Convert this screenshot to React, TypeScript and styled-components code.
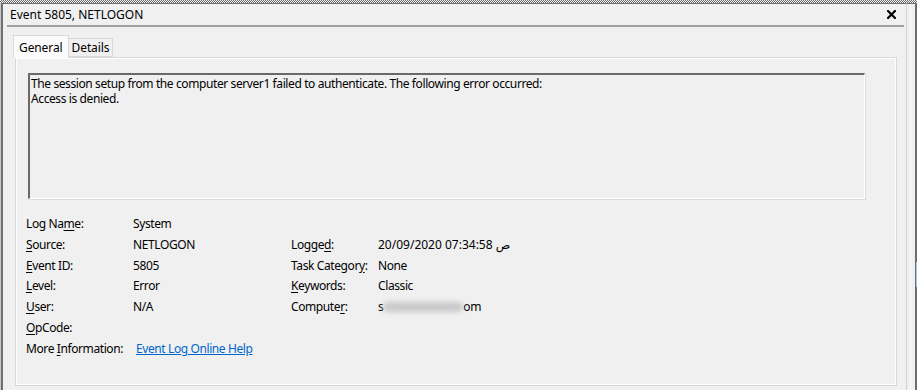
import React, { FC } from "react";
import styled, { createGlobalStyle } from "styled-components";

const Global = createGlobalStyle`
    html, body { margin: 0; padding: 0; background: #f0f0f0; }
    body { font-family: "Noto Sans", "DejaVu Sans", sans-serif; font-size: 12px; color: #000; }
`

const Page = styled.div`
    width: 917px;
    height: 390px;
    display: flex;
    flex-direction: column;
    overflow: hidden;
    background: #f0f0f0;
`

const Hatch = styled.div`
    height: 3px;
    background: repeating-conic-gradient(#6a6a6a 0 25%, #f4f4f4 0 50%) 0 0 / 2px 2px;
`

const Frame = styled.div`
    flex: 1;
    display: flex;
    min-height: 0;
`

const LeftEdge = styled.div`
    width: 3px;
    border-left: 1px solid #c8c8c8;
    background: #6f6f6f;
    box-sizing: border-box;
`

const Win = styled.div`
    flex: 1;
    display: flex;
    flex-direction: column;
    border-top: 1px solid #6f6f6f;
    min-width: 0;
`

const RightEdge = styled.div`
    width: 11px;
    box-sizing: border-box;
    border-top: 1px solid #6f6f6f;
    border-left: 1px solid #d4d4d4;
    padding-left: 3px;
    display: flex;
`

const EdgeWhite = styled.div`
    width: 5px;
    border-left: 1px solid #fafafa;
    border-right: 2px solid #6d6d6d;
    box-sizing: content-box;
    position: relative;
`

const EdgeThumb = styled.div`
    position: absolute;
    right: -2px;
    top: 258px;
    width: 1px;
    height: 25px;
    background: #a9c6ee;
`

const TitleBar = styled.div`
    height: 21px;
    margin: 0 2px 0 4px;
    padding: 0 0 0 3px;
    display: flex;
    align-items: center;
    justify-content: space-between;
    border-bottom: 2px solid #a0a0a0;
`

const Title = styled.span`
    font-size: 12px;
`

const Close = styled.svg`
    width: 9px;
    height: 9px;
    margin-right: 8px;
`

const Body = styled.div`
    flex: 1;
    display: flex;
    flex-direction: column;
    padding: 8px 9px 4px 10px;
    min-height: 0;
    letter-spacing: -0.4px;
`

const TabRow = styled.div`
    display: flex;
    align-items: flex-end;
    height: 22px;
    position: relative;
    z-index: 1;
`

const Tab = styled.div<{ $active?: boolean }>`
    box-sizing: border-box;
    height: ${p => (p.$active ? 23 : 19)}px;
    padding: 0 ${p => (p.$active ? 5 : 3)}px;
    display: flex;
    align-items: center;
    border: 1px solid #d9d9d9;
    border-bottom: ${p => (p.$active ? "none" : "1px solid #d9d9d9")};
    border-left: ${p => (p.$active ? "1px solid #d9d9d9" : "none")};
    background: ${p => (p.$active ? "#fbfbfb" : "#f0f0f0")};
    margin-bottom: ${p => (p.$active ? -1 : 0)}px;
    font-size: 12px;
    letter-spacing: -0.1px;
`

const Panel = styled.div`
    flex: 1;
    border: 1px solid #d9d9d9;
    box-shadow: inset 1px 1px 0 #fff, inset -1px -1px 0 #fff;
    margin-left: 2px;
    padding: 15px 31px 0 12px;
    display: flex;
    flex-direction: column;
    min-height: 0;
`

const Description = styled.div`
    height: 126px;
    box-sizing: border-box;
    border-top: 2px solid #696969;
    border-left: 2px solid #696969;
    border-right: 1px solid #fff;
    border-bottom: 1px solid #fff;
    box-shadow: 1px 1px 0 #dcdcdc;
    padding: 1px 1px;
    line-height: 15px;
    font-size: 12px;
`

const Details = styled.div`
    display: grid;
    grid-template-columns: 107px 158px 87px 1fr;
    grid-auto-rows: 20.85px;
    align-items: center;
    margin: 14px 0 0 -2px;
    font-size: 12px;
`

const Label = styled.span``

const Value = styled.span``

const Key = styled.u`
    text-decoration-thickness: 1px;
    text-underline-offset: 2px;
`

const Link = styled.a`
    color: #0066cc;
    text-decoration: underline;
    margin-left: 3px;
    grid-column: 2 / span 2;
    cursor: pointer;
`

const Smudge = styled.span`
    display: inline-block;
    width: 80px;
    height: 10px;
    vertical-align: -1px;
    background: #c9c9c9;
    filter: blur(2.5px);
    border-radius: 5px;
`

const App: FC = () => {
    return (
        <Page>
            <Global />
            <Hatch />
            <Frame>
                <LeftEdge />
                <Win>
                    <TitleBar>
                        <Title>Event 5805, NETLOGON</Title>
                        <Close viewBox="0 0 9 9">
                            <path d="M1 1 L8 8 M8 1 L1 8" stroke="#000" strokeWidth="2.2" strokeLinecap="square" />
                        </Close>
                    </TitleBar>
                    <Body>
                        <TabRow>
                            <Tab $active>General</Tab>
                            <Tab>Details</Tab>
                        </TabRow>
                        <Panel>
                            <Description>
                                The session setup from the computer server1 failed to authenticate. The following error occurred:
                                <br />
                                Access is denied.
                            </Description>
                            <Details>
                                <Label>Log Na<Key>m</Key>e:</Label>
                                <Value>System</Value>
                                <span />
                                <span />

                                <Label><Key>S</Key>ource:</Label>
                                <Value>NETLOGON</Value>
                                <Label>Logge<Key>d</Key>:</Label>
                                <Value>20/09/2020 07:34:58 ص</Value>

                                <Label><Key>E</Key>vent ID:</Label>
                                <Value>5805</Value>
                                <Label>Task Categor<Key>y</Key>:</Label>
                                <Value>None</Value>

                                <Label><Key>L</Key>evel:</Label>
                                <Value>Error</Value>
                                <Label><Key>K</Key>eywords:</Label>
                                <Value>Classic</Value>

                                <Label><Key>U</Key>ser:</Label>
                                <Value>N/A</Value>
                                <Label>Compute<Key>r</Key>:</Label>
                                <Value>s<Smudge />om</Value>

                                <Label><Key>O</Key>pCode:</Label>
                                <span />
                                <span />
                                <span />

                                <Label>More <Key>I</Key>nformation:</Label>
                                <Link>Event Log Online Help</Link>
                            </Details>
                        </Panel>
                    </Body>
                </Win>
                <RightEdge>
                    <EdgeWhite>
                        <EdgeThumb />
                    </EdgeWhite>
                </RightEdge>
            </Frame>
        </Page>
    )
}

export default App
